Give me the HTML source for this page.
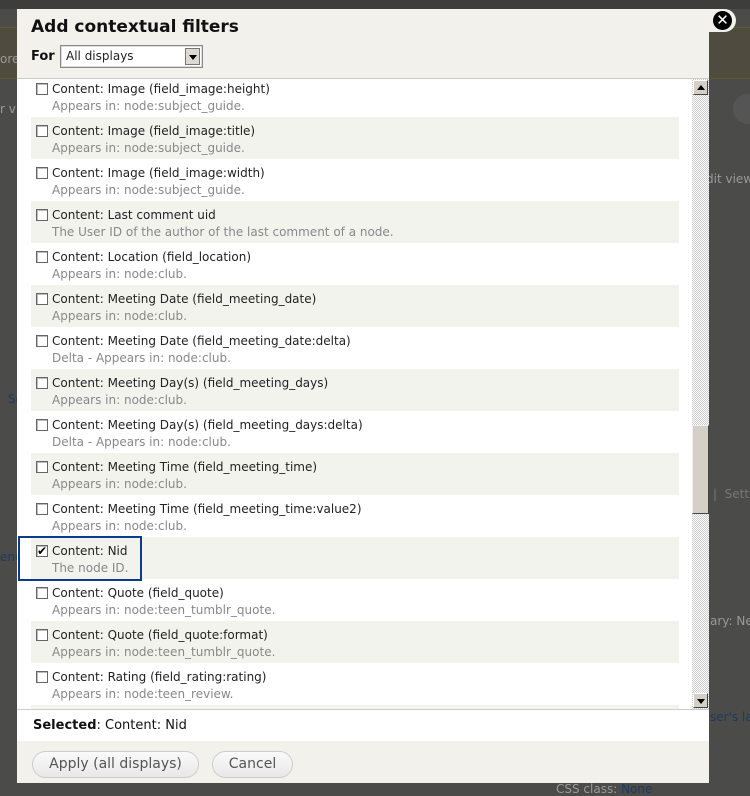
<!DOCTYPE html>
<html><head><style>
*{margin:0;padding:0;box-sizing:border-box}
body{width:750px;height:795px;background:#4b4b4a;position:relative;overflow:hidden;font-family:"DejaVu Sans","Liberation Sans",sans-serif;font-size:12px}
.bg{position:absolute;color:#1d3b5c;font-size:12px;white-space:nowrap}
.dlg{position:absolute;left:17px;top:9px;width:692px;height:774px;background:#f2f1ec}
.title{position:absolute;left:14px;top:8px;font-size:17px;font-weight:bold;color:#111}
.for{position:absolute;left:14px;top:40px;font-weight:bold;font-size:13px;color:#111}
.sel{position:absolute;left:43px;top:36px;width:143px;height:23px;background:#fff;border:1px solid #888;box-shadow:inset 0 0 0 1px #ddd;font-size:12px;padding:3px 5px;color:#222}
.sel i{position:absolute;right:2px;top:2px;width:15px;height:17px;background:#dcd9d2;border:1px solid #777}
.sel i:after{content:"";position:absolute;left:3px;top:6px;border-left:4px solid transparent;border-right:4px solid transparent;border-top:5px solid #000}
.list{position:absolute;left:0;top:69px;width:692px;height:631px;background:#fff;overflow:hidden;border-top:1px solid #ccc}
.rows{position:absolute;left:14px;top:-4px;width:648px}
.r{height:42px;position:relative;white-space:nowrap}
.r:nth-child(even){background:#f3f3ee}
.cb{position:absolute;left:5px;top:8px;width:12px;height:12px;border:1px solid #666;background:#fff;box-shadow:inset 1px 1px 0 #bbb}
.l{position:absolute;left:21px;top:7px;color:#222}
.d{position:absolute;left:21px;top:24px;color:#888}
.sb{position:absolute;left:675px;top:0;width:17px;height:631px;background:repeating-conic-gradient(#ccc 0 25%,#fff 0 50%) 0 0/2px 2px}
.sb .b{position:absolute;left:1px;width:15px;height:15px;background:#d4d0c8;border:1px solid;border-color:#fff #444 #444 #fff}
.th{position:absolute;left:0;top:346px;width:17px;height:89px;background:#d4d0c8;border:1px solid;border-color:#eee #444 #444 #eee}
.selbar{position:absolute;left:0;top:700px;width:692px;height:32px;background:#fff;border-top:1px solid #ccc;padding:8px 16px;font-size:13px;color:#111}
.btn{position:absolute;top:742px;height:27px;border:1px solid #ccc;border-radius:14px;background:linear-gradient(#fafafa,#e8e8e8);color:#555;font-size:14px;text-align:center;line-height:25px}
.close{position:absolute;left:706px;top:9px;width:30px;height:23px;background:#f2f1ec;border-radius:0 12px 12px 0}
.close b{position:absolute;left:7px;top:2px;width:19px;height:19px;border-radius:50%;background:#000;color:#fff;font-size:15px;line-height:19px;text-align:center;font-weight:bold}
</style></head><body>
<div style="position:absolute;left:0;top:0;width:750px;height:9px;background:#3d3d3b"></div>
<div style="position:absolute;left:0;top:27px;width:750px;height:52px;background:#4f4b3f;border-top:1px solid #5f5830;border-bottom:1px solid #5f5830"></div>
<div class="bg" style="left:0;top:52px;color:#999">ore</div>
<div class="bg" style="left:0;top:102px;color:#999">r v</div>
<div class="bg" style="left:706px;top:172px;color:#999">dit view</div>
<div class="bg" style="left:8px;top:392px">Se</div>
<div class="bg" style="left:0;top:550px">end</div>
<div class="bg" style="left:713px;top:487px;color:#777">|&nbsp;&nbsp;Sett</div>
<div class="bg" style="left:710px;top:614px;color:#999">ary: Ne</div>
<div class="bg" style="left:710px;top:710px">ser's lan</div>
<div class="bg" style="left:556px;top:782px;color:#999">CSS class: <span style="color:#1d3b5c">None</span></div>
<div style="position:absolute;left:733px;top:94px;width:30px;height:30px;border-radius:15px;background:#555"></div>
<div class="close"><b>✕</b></div>
<div class="dlg">
<div class="title">Add contextual filters</div>
<div class="for">For</div>
<div class="sel">All displays<i></i></div>
<div class="list"><div class="rows">
<div class="r"><span class="cb"></span><span class="l">Content: Image (field_image:height)</span><span class="d">Appears in: node:subject_guide.</span></div>
<div class="r"><span class="cb"></span><span class="l">Content: Image (field_image:title)</span><span class="d">Appears in: node:subject_guide.</span></div>
<div class="r"><span class="cb"></span><span class="l">Content: Image (field_image:width)</span><span class="d">Appears in: node:subject_guide.</span></div>
<div class="r"><span class="cb"></span><span class="l">Content: Last comment uid</span><span class="d">The User ID of the author of the last comment of a node.</span></div>
<div class="r"><span class="cb"></span><span class="l">Content: Location (field_location)</span><span class="d">Appears in: node:club.</span></div>
<div class="r"><span class="cb"></span><span class="l">Content: Meeting Date (field_meeting_date)</span><span class="d">Appears in: node:club.</span></div>
<div class="r"><span class="cb"></span><span class="l">Content: Meeting Date (field_meeting_date:delta)</span><span class="d">Delta - Appears in: node:club.</span></div>
<div class="r"><span class="cb"></span><span class="l">Content: Meeting Day(s) (field_meeting_days)</span><span class="d">Appears in: node:club.</span></div>
<div class="r"><span class="cb"></span><span class="l">Content: Meeting Day(s) (field_meeting_days:delta)</span><span class="d">Delta - Appears in: node:club.</span></div>
<div class="r"><span class="cb"></span><span class="l">Content: Meeting Time (field_meeting_time)</span><span class="d">Appears in: node:club.</span></div>
<div class="r"><span class="cb"></span><span class="l">Content: Meeting Time (field_meeting_time:value2)</span><span class="d">Appears in: node:club.</span></div>
<div class="r"><span class="cb" style="font-size:12px;line-height:10px;text-align:center;font-weight:bold">✔</span><span class="l">Content: Nid</span><span class="d">The node ID.</span></div>
<div class="r"><span class="cb"></span><span class="l">Content: Quote (field_quote)</span><span class="d">Appears in: node:teen_tumblr_quote.</span></div>
<div class="r"><span class="cb"></span><span class="l">Content: Quote (field_quote:format)</span><span class="d">Appears in: node:teen_tumblr_quote.</span></div>
<div class="r"><span class="cb"></span><span class="l">Content: Rating (field_rating:rating)</span><span class="d">Appears in: node:teen_review.</span></div>
<div class="r"></div>
</div>
<div style="position:absolute;left:1px;top:457px;width:124px;height:45px;border:2px solid #0b3b8c"></div>
<div class="sb"><div class="b" style="top:1px"><span style="position:absolute;left:3px;top:4px;border-left:4px solid transparent;border-right:4px solid transparent;border-bottom:5px solid #000"></span></div><div class="th"></div><div class="b" style="top:614px"><span style="position:absolute;left:3px;top:5px;border-left:4px solid transparent;border-right:4px solid transparent;border-top:5px solid #000"></span></div></div>
</div>
<div class="selbar"><b>Selected</b>: Content: Nid</div>
<div class="btn" style="left:15px;width:167px">Apply (all displays)</div>
<div class="btn" style="left:195px;width:81px">Cancel</div>
</div>
</body></html>
